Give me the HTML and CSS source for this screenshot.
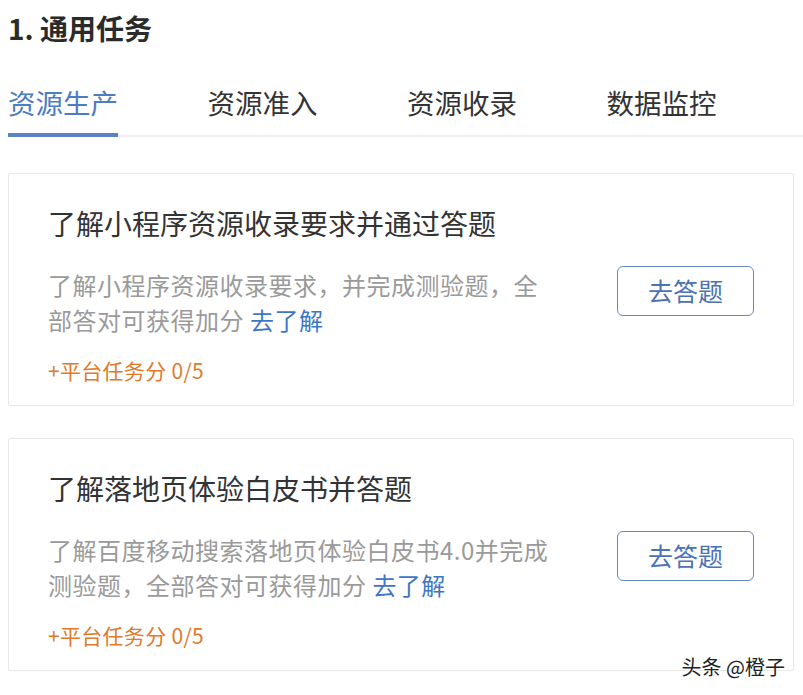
FILE: index.html
```html
<!DOCTYPE html>
<html lang="zh-CN">
<head>
<meta charset="utf-8">
<title>通用任务</title>
<link rel="stylesheet" href="styles.css">
</head>
<body>
<div class="page">
  <h1 class="section-title">1. 通用任务</h1>
  <nav class="tabs">
    <span class="tab active">资源生产</span>
    <span class="tab">资源准入</span>
    <span class="tab">资源收录</span>
    <span class="tab">数据监控</span>
  </nav>
  <div class="cards">
    <div class="card">
      <div class="card-body">
        <div class="card-title">了解小程序资源收录要求并通过答题</div>
        <p class="card-desc">了解小程序资源收录要求，并完成测验题，全部答对可获得加分 <span class="link">去了解</span></p>
        <div class="card-score">+平台任务分 0/5</div>
      </div>
      <button class="btn">去答题</button>
    </div>
    <div class="card">
      <div class="card-body">
        <div class="card-title">了解落地页体验白皮书并答题</div>
        <p class="card-desc">了解百度移动搜索落地页体验白皮书4.0并完成测验题，全部答对可获得加分 <span class="link">去了解</span></p>
        <div class="card-score">+平台任务分 0/5</div>
      </div>
      <button class="btn">去答题</button>
    </div>
  </div>
  <div class="watermark">头条 @橙子</div>
</div>
</body>
</html>
```
FILE: styles.css
```css
html, body {
  margin: 0;
  padding: 0;
  background: #ffffff;
}
body {
  font-family: "Noto Sans CJK SC", "Noto Sans", sans-serif;
  color: #333333;
}
.page {
  position: relative;
  width: 803px;
  height: 695px;
  padding: 0 9px 0 8px;
  box-sizing: border-box;
  overflow: hidden;
}
.section-title {
  margin: 0;
  padding-top: 7.5px;
  font-size: 28px;
  line-height: 40px;
  font-weight: 700;
  color: #2b2b2b;
}
.tabs {
  display: flex;
  gap: 89.5px;
  margin-top: 34px;
  border-bottom: 2px solid #eeeeee;
  margin-right: -9px;
}
.tab {
  font-size: 27.5px;
  line-height: 40px;
  padding-bottom: 11.5px;
  margin-bottom: -2px;
  border-bottom: 4px solid transparent;
  color: #333333;
  white-space: nowrap;
}
.tab.active {
  color: #4d7cc1;
  border-bottom-color: #5a83bf;
}
.cards {
  display: flex;
  flex-direction: column;
  gap: 32px;
  margin-top: 36px;
}
.card {
  display: flex;
  align-items: center;
  justify-content: space-between;
  border: 1px solid #e8e8e8;
  border-radius: 2px;
  padding: 28.5px 39px 20px 39px;
  box-shadow: 0 0 2px rgba(0, 0, 0, 0.03);
}
.card-body {
  width: 505px;
}
.card-title {
  font-size: 28px;
  line-height: 40px;
  color: #333333;
  white-space: nowrap;
}
.card-desc {
  margin: 24px 0 0 0;
  font-size: 24px;
  letter-spacing: 0.5px;
  line-height: 35px;
  color: #9a9a9a;
}
.link {
  color: #3e76c6;
}
.card-score {
  margin-top: 18.5px;
  font-size: 21px;
  letter-spacing: 0.3px;
  line-height: 30px;
  color: #e07a2a;
}
.btn {
  width: 137px;
  height: 50px;
  margin-bottom: 6px;
  border: 1.5px solid #6488bf;
  border-radius: 6px;
  background: #ffffff;
  color: #4a72b4;
  font-family: "Noto Sans CJK SC", sans-serif;
  font-size: 25px;
  line-height: 1;
  padding: 0;
  flex-shrink: 0;
}
.watermark {
  position: absolute;
  right: 18px;
  bottom: 15px;
  font-size: 20px;
  line-height: 26px;
  color: #222222;
  text-shadow: 0 0 2px #ffffff, 0 0 2px #ffffff, 0 0 3px #ffffff;
}
```
